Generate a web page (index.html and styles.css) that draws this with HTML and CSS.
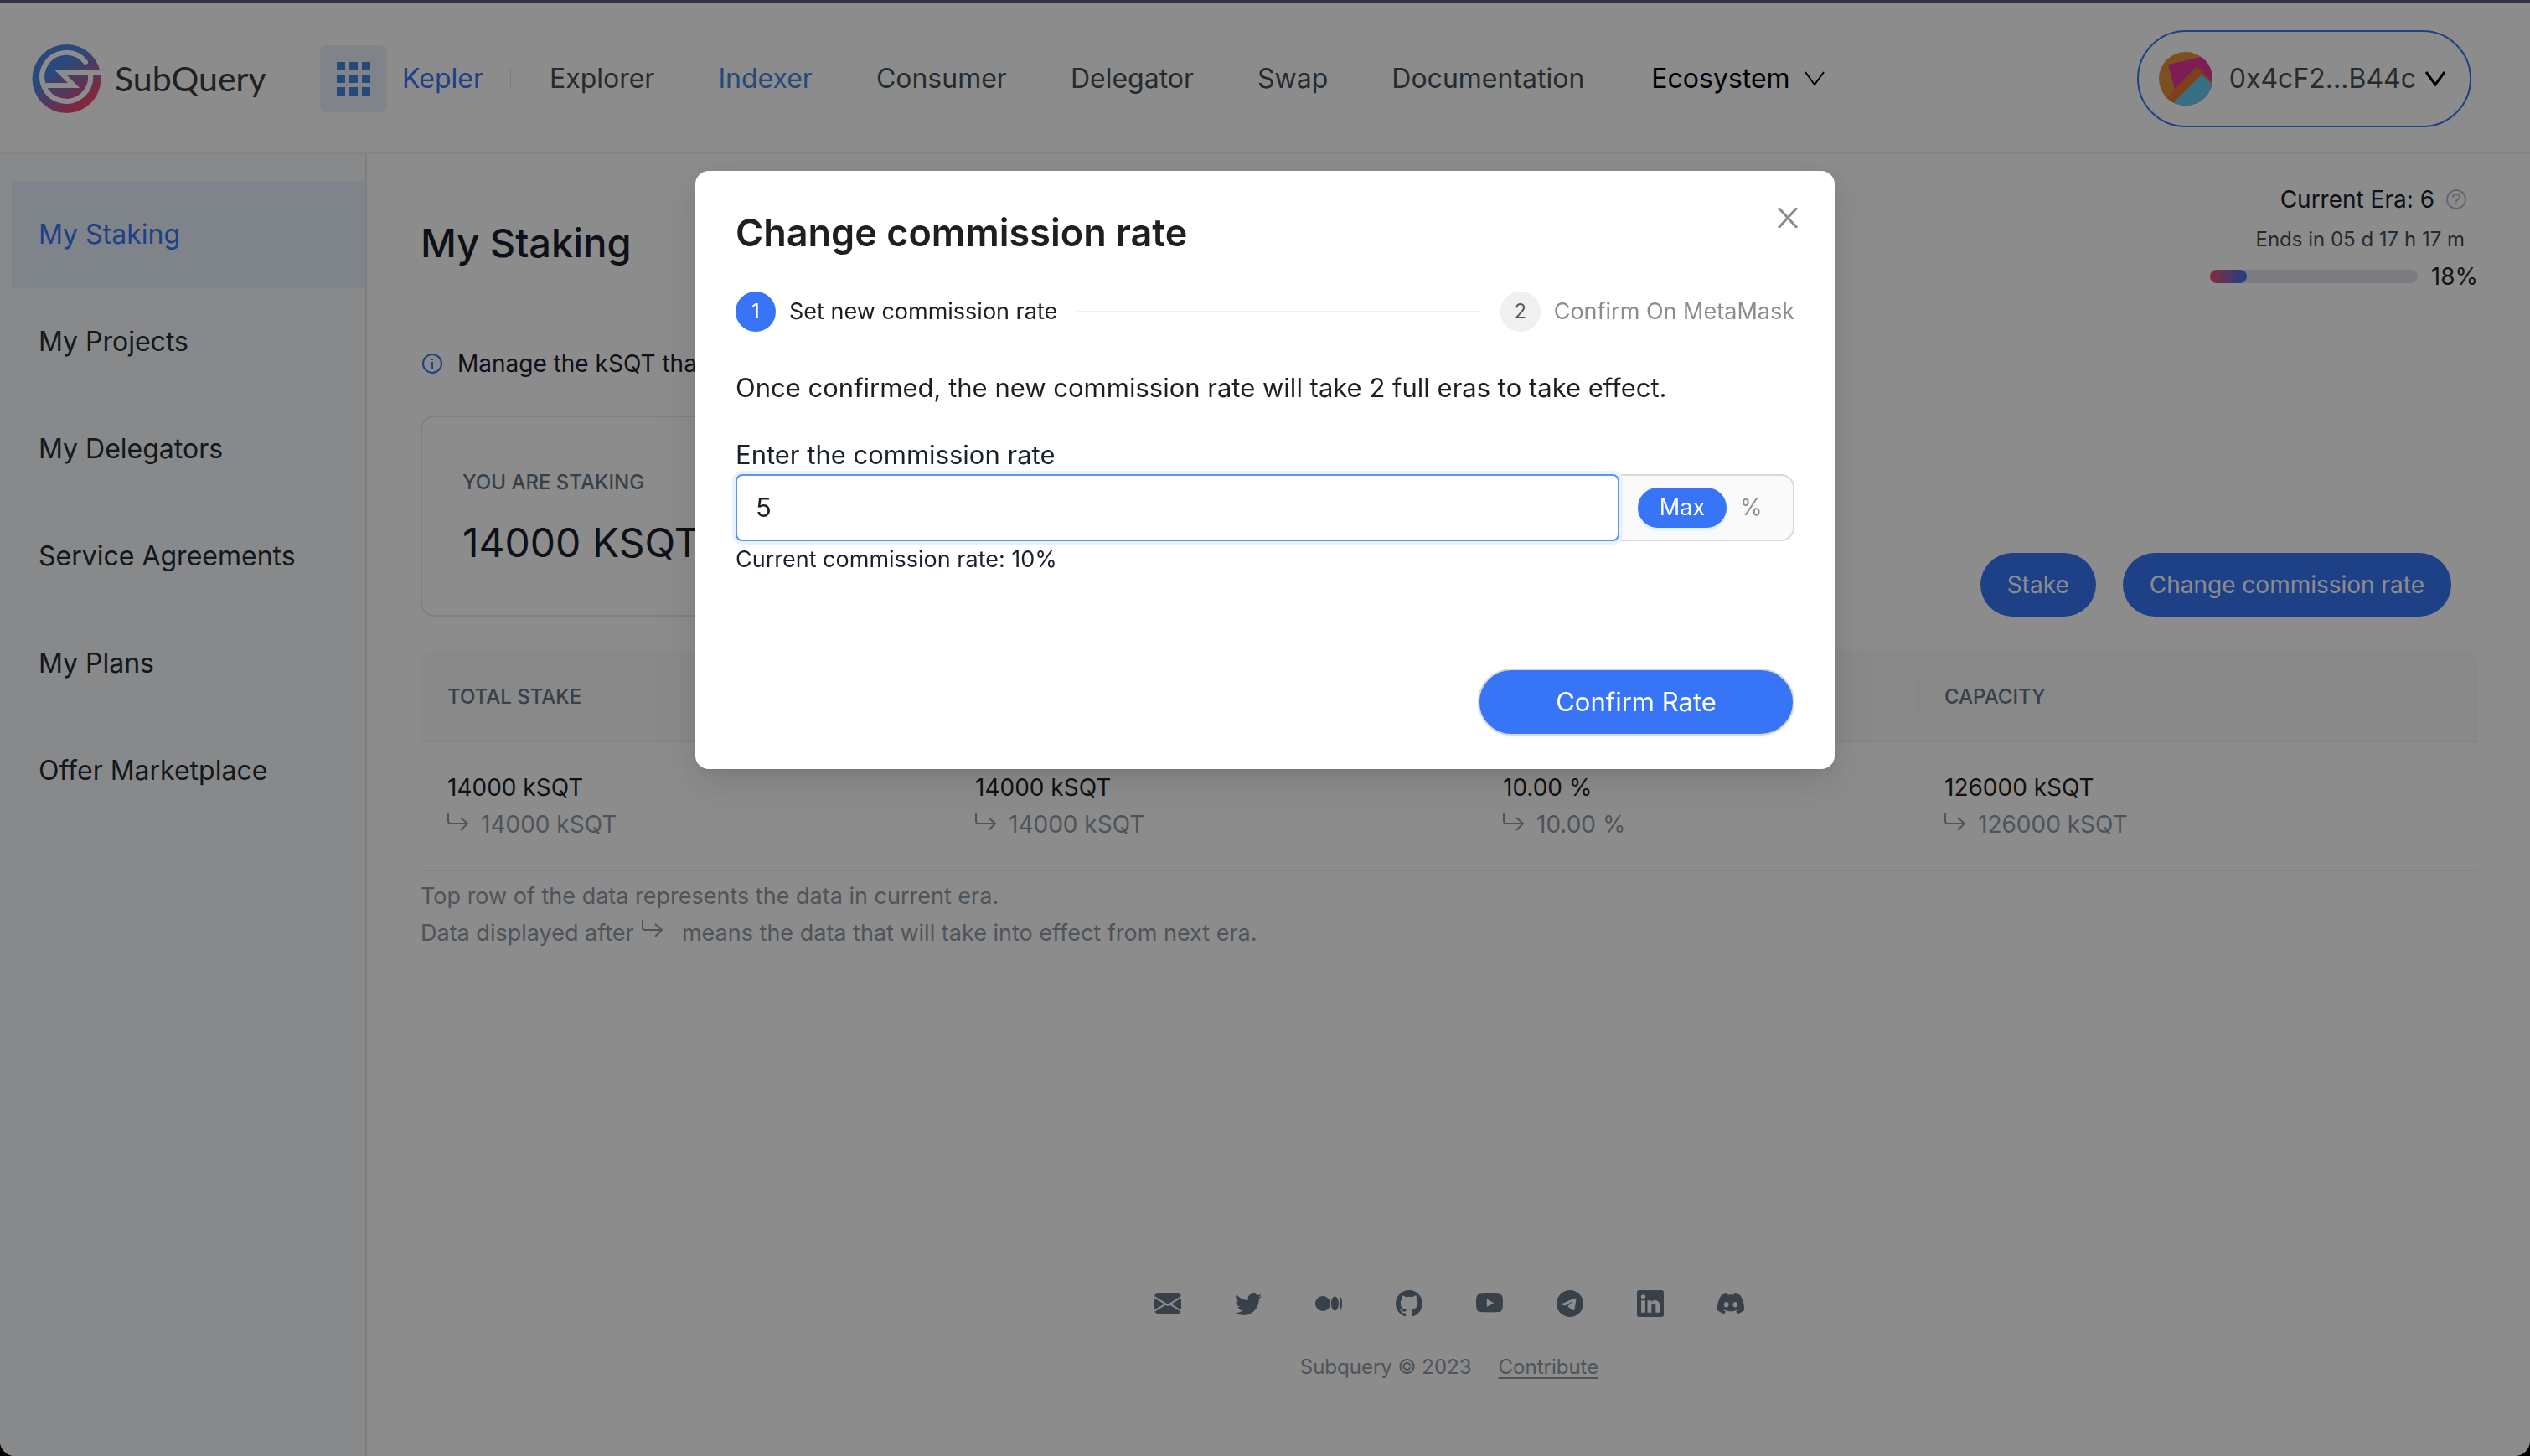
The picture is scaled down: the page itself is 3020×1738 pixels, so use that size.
FILE: index.html
```html
<!DOCTYPE html>
<html lang="en">
<head>
<meta charset="utf-8">
<meta name="viewport" content="width=device-width, initial-scale=1">
<title>My Staking - SubQuery Kepler</title>
<link rel="stylesheet" href="styles.css">
</head>
<body>
<svg class="sprite" aria-hidden="true">
  <symbol id="next-era" viewBox="0 0 26 22"><path d="M1 1v9q0 3 3 3h20M16 6l8 7-8 8" fill="none" stroke="currentColor" stroke-width="2"/></symbol>
  <symbol id="chevron" viewBox="0 0 26 20"><path d="M2 2l11 15L24 2" fill="none" stroke="currentColor"/></symbol>
</svg>

<div class="page">
  <header class="header">
    <a class="logo" href="#">
      <svg class="logo-mark" viewBox="0 0 83 82" aria-hidden="true">
        <defs><linearGradient id="brand" x1="0.2" y1="0.1" x2="0.8" y2="0.9"><stop offset="0.3" stop-color="#4a86dd"/><stop offset="1" stop-color="#fb416d"/></linearGradient></defs>
        <circle cx="41.500" cy="41" r="41" fill="url(#brand)"/>
        <path d="M64 21A29 29 0 1 0 70 36" fill="none" stroke="#fff" stroke-width="6" stroke-linecap="round"/>
        <path d="M83 33H34L50 49H13" fill="none" stroke="#fff" stroke-width="6"/>
      </svg>
      <span>SubQuery</span>
    </a>
    <button class="apps" type="button" aria-label="Apps">
      <svg viewBox="0 0 40 40" aria-hidden="true"><path d="M0 0h10v10H0zM15 0h10v10H15zM30 0h10v10H30zM0 15h10v10H0zM15 15h10v10H15zM30 15h10v10H30zM0 30h10v10H0zM15 30h10v10H15zM30 30h10v10H30z" fill="currentColor"/></svg>
    </button>
    <a class="kepler" href="#">Kepler</a>
    <nav class="nav">
      <a href="#">Explorer</a>
      <a class="current" href="#">Indexer</a>
      <a href="#">Consumer</a>
      <a href="#">Delegator</a>
      <a href="#">Swap</a>
      <a href="#">Documentation</a>
      <button class="ecosystem" type="button">Ecosystem <svg class="chevron" aria-hidden="true"><use href="#chevron"/></svg></button>
    </nav>
    <button class="account" type="button">
      <svg class="avatar" viewBox="0 0 64 64" aria-hidden="true">
        <defs><clipPath id="disc"><circle cx="32" cy="32" r="32"/></clipPath></defs>
        <g clip-path="url(#disc)">
          <path fill="#e4923a" d="M0 0h64v64H0z"/>
          <path fill="#e5389a" d="M11 15L50 6L66 10V46H19z"/>
          <path fill="#e37630" d="M45 17L5 59L12 70L70 66V42z"/>
          <path fill="#64cbee" d="M51 27L12 66H70V44z"/>
        </g>
      </svg>
      <span>0x4cF2...B44c</span>
      <svg class="chevron bold" aria-hidden="true"><use href="#chevron"/></svg>
    </button>
  </header>

  <div class="body">
    <aside class="sidebar">
      <a class="active" href="#">My Staking</a>
      <a href="#">My Projects</a>
      <a href="#">My Delegators</a>
      <a href="#">Service Agreements</a>
      <a href="#">My Plans</a>
      <a href="#">Offer Marketplace</a>
    </aside>

    <main class="main">
      <div class="heading">
        <h1>My Staking</h1>
        <div class="era">
          <div class="era-now">Current Era: 6
            <svg class="icon" viewBox="0 0 24 24" aria-hidden="true"><circle cx="12" cy="12" r="11" fill="none" stroke="currentColor" stroke-width="2"/><path d="M8 10q0-4 4-4t4 3q0 2-2 3t-2 3" fill="none" stroke="currentColor" stroke-width="2"/><path d="M11 16h2v2h-2z" fill="currentColor"/></svg>
          </div>
          <div class="era-ends">Ends in 05 d 17 h 17 m</div>
          <div class="era-progress"><div class="track"><div class="fill" style="width:18%"></div></div><span>18%</span></div>
        </div>
      </div>

      <p class="info">
        <svg class="icon" viewBox="0 0 24 24" aria-hidden="true"><circle cx="12" cy="12" r="11" fill="none" stroke="currentColor" stroke-width="2"/><path d="M11 10h2v8h-2zM11 6h2v2h-2z" fill="currentColor"/></svg>
        Manage the kSQT that
      </p>

      <div class="summary">
        <section class="card">
          <h2>YOU ARE STAKING</h2>
          <p>14000 KSQT</p>
        </section>
        <div class="actions">
          <button type="button">Stake</button>
          <button type="button">Change commission rate</button>
        </div>
      </div>

      <table class="stakes">
        <colgroup><col class="c1"><col class="c2"><col class="c3"><col class="c4"></colgroup>
        <thead>
          <tr><th scope="col">TOTAL STAKE</th><th></th><th></th><th scope="col">CAPACITY</th></tr>
        </thead>
        <tbody>
          <tr>
            <td>14000 kSQT<div class="next"><svg class="arrow" aria-hidden="true"><use href="#next-era"/></svg>14000 kSQT</div></td>
            <td>14000 kSQT<div class="next"><svg class="arrow" aria-hidden="true"><use href="#next-era"/></svg>14000 kSQT</div></td>
            <td>10.00 %<div class="next"><svg class="arrow" aria-hidden="true"><use href="#next-era"/></svg>10.00 %</div></td>
            <td>126000 kSQT<div class="next"><svg class="arrow" aria-hidden="true"><use href="#next-era"/></svg>126000 kSQT</div></td>
          </tr>
        </tbody>
      </table>
      <div class="notes">
        <p>Top row of the data represents the data in current era.</p>
        <p>Data displayed after <svg class="arrow" aria-hidden="true"><use href="#next-era"/></svg> means the data that will take into effect from next era.</p>
      </div>

      <footer class="footer">
        <div class="social">
          <a href="#" aria-label="Email"><svg viewBox="0 0 16 16"><path d="M.05 3.555A2 2 0 0 1 2 2h12a2 2 0 0 1 1.950 1.555L8 8.414.05 3.555ZM0 4.697v7.104l5.803-3.558L0 4.697ZM6.761 8.830l-6.570 4.027A2 2 0 0 0 2 14h12a2 2 0 0 0 1.808-1.144l-6.570-4.027L8 9.586l-1.239-.757Zm3.436-.586L16 11.801V4.697l-5.803 3.546Z"/></svg></a>
          <a href="#" aria-label="Twitter"><svg viewBox="0 0 16 16"><path d="M5.026 15c6.038 0 9.341-5.003 9.341-9.334 0-.14 0-.282-.006-.422A6.685 6.685 0 0 0 16 3.542a6.658 6.658 0 0 1-1.889.518 3.301 3.301 0 0 0 1.447-1.817 6.533 6.533 0 0 1-2.087.793A3.286 3.286 0 0 0 7.875 6.030a9.325 9.325 0 0 1-6.767-3.429 3.289 3.289 0 0 0 1.018 4.382A3.323 3.323 0 0 1 .64 6.575v.045a3.288 3.288 0 0 0 2.632 3.218 3.203 3.203 0 0 1-.865.115 3.230 3.230 0 0 1-.614-.057 3.283 3.283 0 0 0 3.067 2.277A6.588 6.588 0 0 1 .78 13.580a6.320 6.320 0 0 1-.78-.045A9.344 9.344 0 0 0 5.026 15z"/></svg></a>
          <a href="#" aria-label="Medium"><svg viewBox="0 0 16 16"><path d="M9.025 8c0 2.485-2.020 4.500-4.513 4.500A4.506 4.506 0 0 1 0 8c0-2.486 2.020-4.500 4.512-4.500A4.506 4.506 0 0 1 9.025 8zm4.950 0c0 2.340-1.010 4.236-2.256 4.236-1.246 0-2.256-1.897-2.256-4.236 0-2.340 1.010-4.236 2.256-4.236 1.246 0 2.256 1.897 2.256 4.236zM16 8c0 2.096-.355 3.795-.794 3.795-.438 0-.793-1.700-.793-3.795 0-2.096.355-3.795.794-3.795.438 0 .793 1.699.793 3.795z"/></svg></a>
          <a href="#" aria-label="GitHub"><svg viewBox="0 0 16 16"><path d="M8 0C3.580 0 0 3.580 0 8c0 3.540 2.290 6.530 5.470 7.590.4.070.55-.17.55-.38 0-.19-.01-.82-.01-1.490-2.010.37-2.530-.49-2.690-.94-.09-.23-.48-.94-.82-1.130-.28-.15-.68-.52-.01-.53.63-.01 1.080.58 1.230.82.72 1.210 1.870.87 2.330.66.07-.52.28-.87.51-1.070-1.780-.2-3.640-.89-3.640-3.950 0-.87.31-1.590.82-2.150-.08-.2-.36-1.020.08-2.120 0 0 .67-.21 2.200.82.64-.18 1.320-.27 2-.27.68 0 1.360.09 2 .27 1.530-1.040 2.200-.82 2.200-.82.44 1.100.16 1.920.08 2.120.51.56.82 1.270.82 2.150 0 3.070-1.870 3.750-3.650 3.950.29.25.54.73.54 1.480 0 1.070-.01 1.930-.01 2.200 0 .21.15.46.55.38A8.012 8.012 0 0 0 16 8c0-4.420-3.580-8-8-8z"/></svg></a>
          <a href="#" aria-label="YouTube"><svg viewBox="0 0 16 16"><path d="M8.051 1.999h.089c.822.003 4.987.033 6.110.335a2.010 2.010 0 0 1 1.415 1.420c.101.38.172.883.22 1.402l.01.104.022.26.008.104c.065.914.073 1.770.074 1.957v.075c-.001.194-.01 1.108-.082 2.060l-.008.105-.009.104c-.05.572-.124 1.140-.235 1.558a2.007 2.007 0 0 1-1.415 1.420c-1.160.312-5.569.334-6.180.335h-.142c-.309 0-1.587-.006-2.927-.052l-.17-.006-.087-.004-.171-.007-.171-.007c-1.110-.049-2.167-.128-2.654-.26a2.007 2.007 0 0 1-1.415-1.419c-.111-.417-.185-.986-.235-1.558L.09 9.820l-.008-.104A31.400 31.400 0 0 1 0 7.680v-.123c.002-.215.01-.958.064-1.778l.007-.103.003-.052.008-.104.022-.26.01-.104c.048-.519.119-1.023.22-1.402a2.007 2.007 0 0 1 1.415-1.420c.487-.13 1.544-.21 2.654-.26l.17-.007.172-.006.086-.003.171-.007A99.788 99.788 0 0 1 7.858 2h.193zM6.400 5.209v4.818l4.157-2.408L6.400 5.209z"/></svg></a>
          <a href="#" aria-label="Telegram"><svg viewBox="0 0 16 16"><path d="M16 8A8 8 0 1 1 0 8a8 8 0 0 1 16 0zM8.287 5.906c-.778.324-2.334.994-4.666 2.010-.378.15-.577.298-.595.442-.03.243.275.339.69.47l.175.055c.408.133.958.288 1.243.294.26.006.549-.1.868-.32 2.179-1.471 3.304-2.214 3.374-2.230.05-.012.12-.026.166.016.047.041.042.12.037.141-.03.129-1.227 1.241-1.846 1.817-.193.18-.33.307-.358.336a8.154 8.154 0 0 1-.188.186c-.38.366-.664.64.015 1.088.327.216.589.393.85.571.284.194.568.387.936.629.093.06.183.125.27.187.331.236.63.448.997.414.214-.02.435-.22.547-.82.265-1.417.786-4.486.906-5.751a1.426 1.426 0 0 0-.013-.315.337.337 0 0 0-.114-.217.526.526 0 0 0-.31-.093c-.3.005-.763.166-2.984 1.090z"/></svg></a>
          <a href="#" aria-label="LinkedIn"><svg viewBox="0 0 16 16"><path d="M0 1.146C0 .513.526 0 1.175 0h13.650C15.474 0 16 .513 16 1.146v13.708c0 .633-.526 1.146-1.175 1.146H1.175C.526 16 0 15.487 0 14.854V1.146zm4.943 12.248V6.169H2.542v7.225h2.401zm-1.200-8.212c.837 0 1.358-.554 1.358-1.248-.015-.709-.52-1.248-1.342-1.248-.822 0-1.359.54-1.359 1.248 0 .694.521 1.248 1.327 1.248h.016zm4.908 8.212V9.359c0-.216.016-.432.08-.586.173-.431.568-.878 1.232-.878.869 0 1.216.662 1.216 1.634v3.865h2.401V9.250c0-2.220-1.184-3.252-2.764-3.252-1.274 0-1.845.7-2.165 1.193v.025h-.016a5.540 5.540 0 0 1 .016-.025V6.169h-2.400c.03.678 0 7.225 0 7.225h2.400z"/></svg></a>
          <a href="#" aria-label="Discord"><svg viewBox="0 0 16 16"><path d="M13.545 2.907a13.227 13.227 0 0 0-3.257-1.011.05.05 0 0 0-.052.025c-.141.25-.297.577-.406.833a12.190 12.190 0 0 0-3.658 0 8.258 8.258 0 0 0-.412-.833.051.051 0 0 0-.052-.025c-1.125.194-2.220.534-3.257 1.011a.041.041 0 0 0-.021.018C.356 6.024-.213 9.047.066 12.032c.001.014.01.028.021.037a13.276 13.276 0 0 0 3.995 2.020.05.05 0 0 0 .056-.019c.308-.42.582-.863.818-1.329a.05.05 0 0 0-.01-.059.051.051 0 0 0-.018-.011 8.875 8.875 0 0 1-1.248-.595.05.05 0 0 1-.02-.066.051.051 0 0 1 .015-.019c.084-.063.168-.129.248-.195a.05.05 0 0 1 .051-.007c2.619 1.196 5.454 1.196 8.041 0a.052.052 0 0 1 .053.007c.08.066.164.132.248.195a.051.051 0 0 1-.004.085 8.254 8.254 0 0 1-1.249.594.05.05 0 0 0-.03.03.052.052 0 0 0 .003.041c.24.465.515.909.817 1.329a.05.05 0 0 0 .056.019 13.235 13.235 0 0 0 4.001-2.020.049.049 0 0 0 .021-.037c.334-3.451-.559-6.449-2.366-9.106a.034.034 0 0 0-.02-.019zm-8.198 7.307c-.789 0-1.438-.724-1.438-1.612 0-.889.637-1.613 1.438-1.613.807 0 1.450.73 1.438 1.613 0 .888-.637 1.612-1.438 1.612zm5.316 0c-.788 0-1.438-.724-1.438-1.612 0-.889.637-1.613 1.438-1.613.807 0 1.451.73 1.438 1.613 0 .888-.631 1.612-1.438 1.612z"/></svg></a>
        </div>
        <p class="legal"><span>Subquery © 2023</span><a href="#">Contribute</a></p>
      </footer>
    </main>
  </div>
</div>

<div class="mask">
  <form class="modal" role="dialog" aria-modal="true" aria-labelledby="modal-title">
    <button class="close" type="button" aria-label="Close"><svg viewBox="0 0 24 24" aria-hidden="true"><path d="M1 0L23 24M23 0L1 24" stroke="currentColor" stroke-width="3"/></svg></button>
    <h2 id="modal-title">Change commission rate</h2>
    <ol class="steps">
      <li class="step current"><span class="num">1</span>Set new commission rate</li>
      <li class="line" aria-hidden="true"></li>
      <li class="step"><span class="num">2</span>Confirm On MetaMask</li>
    </ol>
    <p class="lead">Once confirmed, the new commission rate will take 2 full eras to take effect.</p>
    <label for="rate">Enter the commission rate</label>
    <div class="field">
      <input id="rate" type="text" inputmode="decimal" value="5">
      <div class="addon"><button class="max" type="button">Max</button><span>%</span></div>
    </div>
    <p class="hint">Current commission rate: 10%</p>
    <button class="confirm" type="button">Confirm Rate</button>
  </form>
</div>
</body>
</html>
```

FILE: styles.css
```css
:root {
  --blue: #3875f6;
  --sky: #4388dd;
  --ink: #1a202c;
  --body: #454f58;
  --slate: #667585;
  --muted: #8f99a5;
  --line: #f0f0f0;
}

* { box-sizing: border-box; }

html { background: #000; }

body {
  margin: 0;
  font-family: Inter, "Liberation Sans", sans-serif;
  font-size: 28px;
  line-height: 44px;
  color: #1f1f1f;
}

h1, h2, p, ol { margin: 0; padding: 0; font-weight: 400; }
a { color: inherit; text-decoration: none; }
svg { display: block; }

button {
  padding: 0;
  border: 0;
  background: none;
  color: inherit;
  font: inherit;
  cursor: pointer;
}

.sprite { display: none; }
.icon { width: 24px; height: 24px; }
.chevron { width: 26px; height: 20px; color: #000; stroke-width: 2; }
.chevron.bold { stroke-width: 3; }
.arrow { width: 26px; height: 22px; }

.page {
  display: flex;
  flex-direction: column;
  min-height: 100vh;
  overflow: hidden;
  border-radius: 0 0 18px 18px;
  background: #fff;
}

/* Header */
.header {
  display: flex;
  align-items: center;
  padding: 32px 70px 30px 38px;
  border-top: 4px solid #565d7c;
  border-bottom: 2px solid var(--line);
  font-size: 32px;
  color: var(--body);
}

.logo {
  display: flex;
  align-items: center;
  gap: 16px;
  width: 344px;
  font-family: Lato, sans-serif;
  font-size: 41px;
  color: #3c3c3c;
}
.logo-mark { width: 83px; height: 82px; }

.apps {
  display: grid;
  place-items: center;
  width: 80px;
  height: 80px;
  border-radius: 8px;
  background: #e9f0fc;
  color: var(--sky);
}
.apps svg { width: 40px; height: 40px; }

.kepler {
  margin-left: 18px;
  padding-right: 32px;
  border-right: 1px solid #e6e6e6;
  line-height: 26px;
  color: var(--blue);
}

.nav {
  display: flex;
  align-items: center;
  gap: 76px;
  margin-left: 46px;
}
.nav .current { color: var(--sky); }

.ecosystem {
  display: flex;
  align-items: center;
  gap: 16px;
  margin-left: 4px;
  color: #000;
}

.account {
  display: flex;
  align-items: center;
  gap: 10px;
  height: 116px;
  margin-left: auto;
  padding: 0 28px 0 24px;
  border: 2px solid var(--blue);
  border-radius: 58px;
}
.avatar { width: 64px; height: 64px; margin-right: 10px; }

/* Sidebar */
.body { display: flex; flex: 1; }

.sidebar {
  flex: none;
  width: 438px;
  padding: 32px 0 0 14px;
  border-right: 2px solid #e4e4e4;
  background: #f8fafd;
  font-size: 32px;
  color: #242c34;
}
.sidebar a {
  display: block;
  padding-left: 32px;
  line-height: 128px;
}
.sidebar .active {
  background: #e8eefb;
  color: var(--blue);
}

/* Main column */
.main {
  display: flex;
  flex: 1;
  flex-direction: column;
  padding: 32px 62px 84px 64px;
  color: var(--ink);
}

.heading {
  display: flex;
  justify-content: space-between;
  align-items: flex-start;
}
.heading h1 {
  margin-top: 42px;
  font-size: 47px;
  font-weight: 500;
  line-height: 64px;
}

.era {
  display: flex;
  flex-direction: column;
  align-items: flex-end;
}
.era-now {
  display: flex;
  align-items: center;
  gap: 14px;
  padding-right: 14px;
}
.era-now .icon { color: #b7bec8; }
.era-ends {
  padding-right: 16px;
  font-size: 24px;
  line-height: 52px;
  color: var(--body);
}
.era-progress {
  display: flex;
  align-items: center;
  gap: 16px;
  line-height: 36px;
  color: #262626;
}
.track {
  width: 248px;
  height: 16px;
  border-radius: 8px;
  background: #e1e4ea;
}
.fill {
  height: 16px;
  border-radius: 8px;
  background: linear-gradient(90deg, #f0506f, var(--blue));
}

.info {
  display: flex;
  align-items: center;
  gap: 18px;
  margin-top: 64px;
  padding-left: 2px;
}
.info .icon { color: var(--blue); }

.summary {
  display: flex;
  justify-content: space-between;
  align-items: flex-end;
  margin-top: 40px;
}
.card {
  width: 630px;
  padding: 56px 48px 50px;
  border: 2px solid #e8e8e8;
  border-radius: 16px;
}
.card h2 {
  font-size: 24px;
  font-weight: 500;
  color: var(--slate);
}
.card p {
  margin-top: 14px;
  font-size: 48px;
  line-height: 72px;
}
.actions {
  display: flex;
  gap: 32px;
  padding-right: 32px;
}
.actions button {
  height: 76px;
  padding: 0 32px;
  border-radius: 38px;
  background: var(--blue);
  color: #fff;
}

.stakes {
  width: 100%;
  margin-top: 40px;
  border-collapse: separate;
  border-spacing: 0;
  table-layout: fixed;
  color: #1f1f1f;
}
.c1, .c2 { width: 630px; }
.c3 { width: 527px; }
.stakes th, .stakes td {
  padding: 32px;
  border-bottom: 2px solid var(--line);
  text-align: left;
  font-weight: 400;
}
.stakes th {
  padding: 34px 32px 30px;
  background: #fafafa;
  font-size: 24px;
  font-weight: 500;
  color: var(--slate);
}
.stakes th:first-child { border-top-left-radius: 16px; }
.stakes th:last-child {
  border-top-right-radius: 16px;
  background: linear-gradient(var(--line), var(--line)) no-repeat 0 50% / 2px 44px, #fafafa;
}
.next {
  display: flex;
  align-items: center;
  gap: 14px;
  color: var(--muted);
}
.next .arrow { margin-bottom: 6px; }

.notes { margin-top: 8px; font-size: 27px; color: var(--muted); }
.notes .arrow {
  display: inline-block;
  margin-right: 14px;
  margin-left: 2px;
  vertical-align: 4px;
}

.footer { margin-top: auto; color: var(--slate); }
.social {
  display: flex;
  justify-content: center;
  gap: 64px;
}
.social svg { width: 32px; height: 32px; fill: currentColor; }
.legal {
  display: flex;
  justify-content: center;
  gap: 32px;
  margin-top: 38px;
  font-size: 24px;
  color: var(--muted);
}
.legal a { text-decoration: underline; text-underline-offset: 4px; }

/* Dialog */
.mask {
  position: fixed;
  inset: 0;
  display: flex;
  justify-content: center;
  align-items: flex-start;
  padding-top: 204px;
  background: rgba(0, 0, 0, 0.45);
}
.modal {
  position: relative;
  display: flex;
  flex-direction: column;
  width: 1360px;
  max-width: 100%;
  padding: 40px 48px;
  border-radius: 16px;
  background: #fff;
  font-size: 27px;
  box-shadow: 0 12px 32px rgba(0, 0, 0, 0.08), 0 6px 12px -8px rgba(0, 0, 0, 0.12), 0 18px 56px 16px rgba(0, 0, 0, 0.05);
}
.modal h2 {
  font-size: 45px;
  font-weight: 600;
  line-height: 68px;
}
.close {
  position: absolute;
  top: 44px;
  right: 44px;
  color: #8c8c8c;
}
.close svg { width: 24px; height: 24px; }

.steps {
  display: flex;
  align-items: center;
  gap: 24px;
  margin-top: 36px;
  list-style: none;
}
.step {
  display: flex;
  align-items: center;
  gap: 16px;
  color: #8c8c8c;
}
.step.current { color: #1f1f1f; }
.num {
  width: 48px;
  border-radius: 24px;
  background: var(--line);
  font-size: 24px;
  line-height: 48px;
  text-align: center;
  color: #595959;
}
.current .num { background: var(--blue); color: #fff; }
.line { flex: 1; height: 2px; background: var(--line); }

.lead {
  margin: 42px 0 32px;
  font-size: 31px;
  line-height: 50px;
}
.modal label {
  font-size: 31px;
  line-height: 46px;
  color: var(--ink);
}
.field { display: flex; height: 80px; }
.field input {
  flex: 1;
  min-width: 0;
  padding: 0 22px;
  border: 2px solid #5794f7;
  border-radius: 8px;
  outline: 0;
  box-shadow: 0 0 0 4px #e9f2fe;
  color: #1f1f1f;
  font: inherit;
  font-size: 31px;
  z-index: 1;
}
.addon {
  display: flex;
  align-items: center;
  gap: 16px;
  width: 209px;
  padding-left: 22px;
  border: 2px solid #d9d9d9;
  border-left: 0;
  border-radius: 0 16px 16px 0;
  background: #fafafa;
  color: #8c8c8c;
}
.max {
  width: 106px;
  height: 48px;
  border-radius: 24px;
  background: var(--blue);
  box-shadow: 0 4px 0 #e6f1fe;
  color: #fff;
}
.hint { color: var(--ink); }
.confirm {
  align-self: flex-end;
  width: 378px;
  height: 80px;
  margin-top: 108px;
  border: 2px solid #d9d9d9;
  border-radius: 40px;
  background: var(--blue);
  box-shadow: 0 4px 0 rgba(0, 0, 0, 0.02);
  color: #fff;
  font-size: 31px;
}
```
